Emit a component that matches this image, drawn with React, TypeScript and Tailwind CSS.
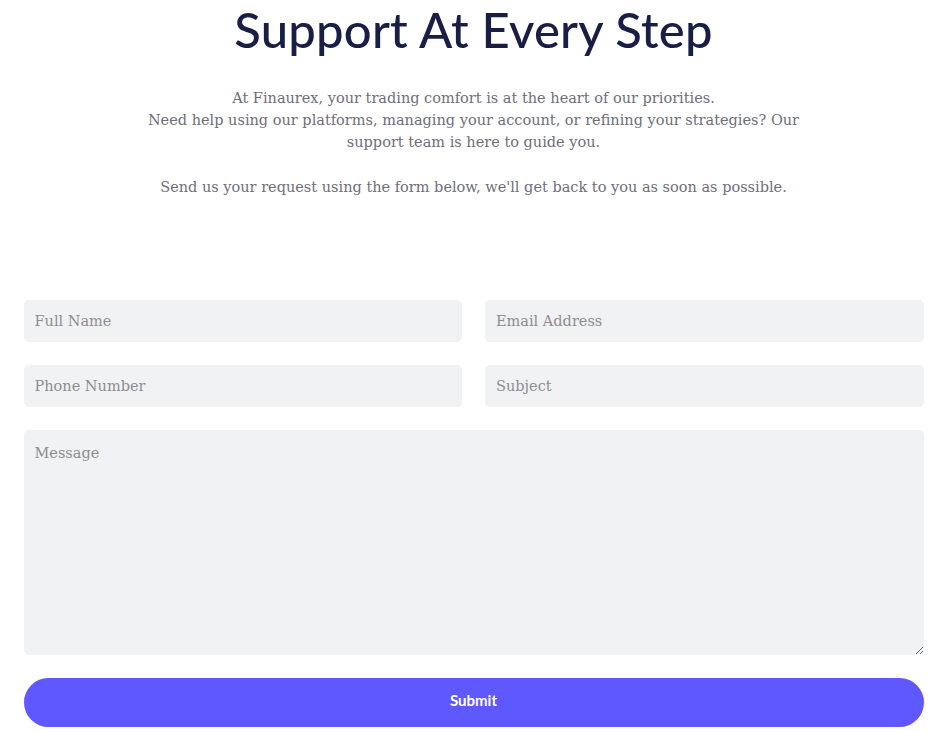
import React from 'react';

const fieldClass =
    'w-full h-[42px] rounded-[5px] bg-[#f1f2f4] px-[11px] text-[14.5px] text-[#4b4b55] placeholder:text-[#8d8d93] outline-none';

const serif = { fontFamily: '"DejaVu Serif", "Liberation Serif", serif' };

export default function App() {
    return (
        <div className="min-h-screen bg-white">
            <div className="max-w-[900px] mx-auto">
                {/* Heading */}
                <h1 className="text-center text-[49px] leading-[60px] font-medium text-[#191e45] tracking-[0.2px] -mt-[1px]" style={{ fontFamily: 'Lato, "Open Sans", sans-serif' }}>
                    Support At Every Step
                </h1>

                {/* Intro copy */}
                <div className="mt-[28px] text-center text-[14.5px] leading-[22px] text-[#6f6e7a]" style={serif}>
                    <p>
                        At Finaurex, your trading comfort is at the heart of our priorities.
                        <br />
                        Need help using our platforms, managing your account, or refining your strategies? Our
                        <br />
                        support team is here to guide you.
                    </p>
                    <p className="mt-[23px]">
                        Send us your request using the form below, we'll get back to you as soon as possible.
                    </p>
                </div>

                {/* Form */}
                <form className="mt-[102px] flex flex-col gap-[23px]" style={serif} onSubmit={(e) => e.preventDefault()}>
                    <div className="grid grid-cols-2 gap-x-[23px] gap-y-[23px]">
                        <input className={fieldClass} placeholder="Full Name" />
                        <input className={fieldClass} placeholder="Email Address" />
                        <input className={fieldClass} placeholder="Phone Number" />
                        <input className={fieldClass} placeholder="Subject" />
                    </div>
                    <textarea
                        className="w-full h-[225px] rounded-[5px] bg-[#f1f2f4] px-[11px] pt-[13px] text-[14.5px] text-[#4b4b55] placeholder:text-[#8d8d93] outline-none block"
                        placeholder="Message"
                    />
                    <button
                        type="submit"
                        className="w-full h-[49px] rounded-full bg-[#5f57ff] text-white text-[15px] font-bold pb-[5px]"
                        style={{ fontFamily: 'Lato, "Open Sans", sans-serif' }}
                    >
                        Submit
                    </button>
                </form>
            </div>
        </div>
    );
}
